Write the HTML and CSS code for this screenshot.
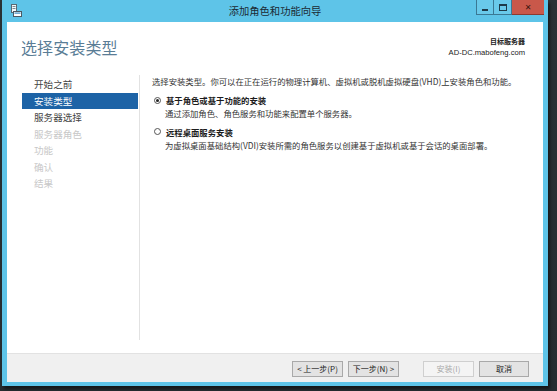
FILE: index.html
```html
<!DOCTYPE html>
<html lang="zh-CN">
<head>
<meta charset="utf-8">
<title>添加角色和功能向导</title>
<link rel="stylesheet" href="styles.css">
</head>
<body>
<div class="window">
  <div class="titlebar">
    <div class="ticon">
      <svg width="12" height="13" viewBox="0 0 12 13">
        <rect x="1.5" y="0.5" width="5" height="8" fill="#f4f8fa" stroke="#5a6a74"/>
        <rect x="2.5" y="2" width="3" height="1" fill="#7a8a94"/>
        <rect x="2.5" y="4" width="3" height="1" fill="#7a8a94"/>
        <rect x="3.5" y="7.5" width="8" height="5" fill="#ffffff" stroke="#4a5a64"/>
        <rect x="4.5" y="8.5" width="6" height="1.2" fill="#3a8ac0"/>
      </svg>
    </div>
    <div class="ttext">添加角色和功能向导</div>
    <div class="wbtns">
      <div class="wbtn min"><span class="minbar"></span></div>
      <div class="wbtn max"><span class="maxbox"></span></div>
      <div class="wbtn close">✕</div>
    </div>
  </div>
  <div class="client">
    <div class="header">
      <div class="htitle">选择安装类型</div>
      <div class="target">
        <div class="tlabel">目标服务器</div>
        <div class="tname">AD-DC.mabofeng.com</div>
      </div>
    </div>
    <div class="main">
      <div class="nav">
        <div class="nitem">开始之前</div>
        <div class="nitem active">安装类型</div>
        <div class="nitem">服务器选择</div>
        <div class="nitem off">服务器角色</div>
        <div class="nitem off">功能</div>
        <div class="nitem off">确认</div>
        <div class="nitem off">结果</div>
      </div>
      <div class="content">
        <div class="intro">选择安装类型。你可以在正在运行的物理计算机、虚拟机或脱机虚拟硬盘(VHD)上安装角色和功能。</div>
        <div class="opt first">
          <div class="orow"><span class="radio checked"></span><span class="olabel">基于角色或基于功能的安装</span></div>
          <div class="odesc">通过添加角色、角色服务和功能来配置单个服务器。</div>
        </div>
        <div class="opt">
          <div class="orow"><span class="radio"></span><span class="olabel">远程桌面服务安装</span></div>
          <div class="odesc">为虚拟桌面基础结构(VDI)安装所需的角色服务以创建基于虚拟机或基于会话的桌面部署。</div>
        </div>
      </div>
    </div>
    <div class="footer">
      <div class="btn">&lt; 上一步(P)</div>
      <div class="btn">下一步(N) &gt;</div>
      <div class="btn disabled wide-gap">安装(I)</div>
      <div class="btn cancel">取消</div>
    </div>
  </div>
</div>
</body>
</html>
```

FILE: styles.css
```css
html, body {
  margin: 0;
  padding: 0;
}
body {
  width: 557px;
  height: 391px;
  overflow: hidden;
  background: linear-gradient(#2a3236, #262d31);
  font-family: "Noto Sans CJK SC", "Liberation Sans", sans-serif;
}
.window {
  margin-left: 2px;
  width: 546px;
  height: 386px;
  box-sizing: border-box;
  padding: 0 5px 4px 5px;
  background: #5ec4e8;
  display: flex;
  flex-direction: column;
  box-shadow: 2px 3px 3px rgba(0,0,0,0.5);
}
.titlebar {
  height: 22px;
  display: grid;
  grid-template-columns: 1fr auto 1fr;
  align-items: start;
}
.ticon {
  padding-left: 3px;
  padding-top: 4px;
  height: 13px;
}
.ticon svg { display: block; }
.ttext {
  font-size: 10.3px;
  line-height: 22px;
  color: #1b2a33;
  white-space: nowrap;
}
.wbtns {
  justify-self: end;
  display: flex;
  height: 15px;
  margin-right: -1px;
}
.wbtn {
  height: 15px;
  box-sizing: border-box;
  display: flex;
  align-items: center;
  justify-content: center;
}
.min, .max {
  width: 18px;
  background: #69c9ea;
  border: 1px solid #3a7894;
  border-top: none;
}
.max { border-left: none; }
.minbar {
  width: 6px;
  height: 2px;
  background: #1e3a4a;
  margin-top: 5px;
}
.maxbox {
  width: 6px;
  height: 4px;
  border: 1px solid #1e3a4a;
  border-top-width: 2px;
}
.close {
  width: 32px;
  background: #c9584a;
  color: #3a1610;
  font-size: 8px;
  font-weight: bold;
  font-family: "DejaVu Sans", sans-serif;
  border-bottom: 1px solid #8c3a30;
}
.client {
  flex: 1;
  background: #ffffff;
  display: flex;
  flex-direction: column;
  min-height: 0;
}
.header {
  height: 53px;
  box-sizing: border-box;
  display: flex;
  justify-content: space-between;
  padding: 15px 18px 0 14px;
}
.htitle {
  font-size: 16px;
  line-height: 20px;
  color: #5a7d96;
  letter-spacing: 0.1px;
}
.target {
  text-align: right;
  padding-top: 0;
  margin-top: -1px;
}
.tlabel {
  font-size: 7px;
  line-height: 10px;
  font-weight: bold;
  color: #222;
}
.tname {
  font-family: "Liberation Sans", sans-serif;
  font-size: 7.6px;
  line-height: 11px;
  color: #222;
  margin-top: 1px;
}
.main {
  flex: 1;
  display: flex;
  min-height: 0;
}
.nav {
  width: 133px;
  box-sizing: border-box;
  padding: 1px 1px 0 15px;
  border-right: 1px solid #e2e2e2;
  margin-bottom: 13px;
  flex: none;
}
.nitem {
  height: 16.5px;
  line-height: 16.5px;
  font-size: 9.6px;
  color: #444;
  padding-left: 12px;
}
.nitem.active {
  background: #1d63a6;
  color: #fff;
}
.nitem.off {
  color: #c8c8c8;
}
.content {
  flex: 1;
  padding: 0 0 0 12px;
  font-size: 8.35px;
  color: #333;
}
.intro {
  line-height: 12px;
  margin-top: 0;
  white-space: nowrap;
}
.opt { margin-top: 6.5px; }
.opt.first { margin-top: 7px; }
.orow {
  display: flex;
  align-items: center;
  height: 12px;
}
.radio {
  width: 7px;
  height: 7px;
  box-sizing: border-box;
  border: 1px solid #555;
  border-radius: 50%;
  margin-left: 2px;
  margin-right: 5px;
  display: flex;
  align-items: center;
  justify-content: center;
  background: #fff;
}
.radio.checked::after {
  content: "";
  width: 3px;
  height: 3px;
  border-radius: 50%;
  background: #222;
}
.olabel {
  font-weight: bold;
  color: #1c1c1c;
}
.odesc {
  padding-left: 13px;
  line-height: 12px;
  margin-top: 1px;
  white-space: nowrap;
}
.footer {
  height: 29px;
  box-sizing: border-box;
  border-top: 1px solid #e2e2e2;
  background: #f0f0f0;
  display: flex;
  align-items: flex-start;
  justify-content: flex-end;
  padding: 7px 14px 0 0;
  gap: 5px;
}
.btn {
  width: 51px;
  height: 16px;
  box-sizing: border-box;
  border: 1px solid #a9a9a9;
  background: #e3e3e3;
  font-size: 8px;
  line-height: 14px;
  color: #222;
  text-align: center;
  white-space: nowrap;
}
.btn.disabled {
  background: #f4f4f4;
  border-color: #cfcfcf;
  color: #a8a8a8;
}
.btn.wide-gap { margin-left: 19px; }
.btn.cancel { width: 50px; }
```
